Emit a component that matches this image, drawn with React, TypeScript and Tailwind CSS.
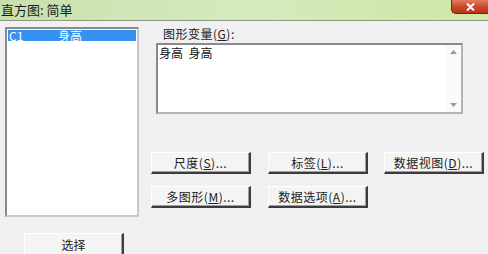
import React from "react"

const font = { fontFamily: '"Noto Sans CJK SC", "DejaVu Sans", sans-serif' }

function Btn({ label, underline, className = "" }: { label: string; underline?: string; className?: string }) {
  // label text, with the hotkey letter underlined inside parentheses
  return (
    <div
      className={
        "h-[22px] w-[100px] flex items-center justify-center bg-[#f4f4f4] border-t border-l border-t-white border-l-white border-r-2 border-b-2 border-r-[#3c3c3c] border-b-[#3c3c3c] text-[12px] text-[#222] shadow-[inset_-1px_-1px_0_#a0a0a0] " +
        className
      }
    >
      {underline ? (
        <span className="tracking-[0.5px]">
          {label}(<span className="underline">{underline}</span>)...
        </span>
      ) : (
        <span>{label}</span>
      )}
    </div>
  )
}

export default function App() {
  return (
    <div className="w-[488px] h-[254px] overflow-hidden flex flex-col bg-[#f0eff1]" style={font}>
      {/* Title bar */}
      <div className="h-[21px] shrink-0 flex items-start justify-between bg-gradient-to-r from-[#c8e0ad] via-[#d5eabd] to-[#cde8a6] border-b border-[#8d9c80]">
        <span className="text-[13px] leading-[19px] text-[#1a1a1a] pl-[1px]">直方图: 简单</span>
        <div className="w-[37px] h-[14px] shrink-0 rounded-bl-[5px] bg-gradient-to-b from-[#e27a5e] via-[#cf4a2c] to-[#b8341a] border-l border-b border-[#6e2616] flex items-center justify-center">
          <svg width="9" height="8" viewBox="0 0 9 8">
            <path d="M1 0.5 L8 7.5 M8 0.5 L1 7.5" stroke="white" strokeWidth="2" />
          </svg>
        </div>
      </div>

      {/* Body */}
      <div className="flex-1 flex pl-[5px] border-l-2 border-l-[#d5e8c0] -ml-[2px]">
        {/* Left column */}
        <div className="flex flex-col w-[134px] pt-[6px]">
          <div className="h-[190px] bg-white border-2 border-t-[#8a8a8a] border-l-[#8a8a8a] border-r-[#c8c8c8] border-b-[#c8c8c8] p-[1px]">
            <div className="h-[11px] bg-[#3592f3] flex items-center text-white text-[12px] leading-none">
              <span className="pl-[1px] w-[50px]">C1</span>
              <span>身高</span>
            </div>
          </div>
          <div className="mt-[16px] ml-[19px]">
            <Btn label="选择" className="h-[24px]" />
          </div>
        </div>

        {/* Right column */}
        <div className="flex flex-col ml-[12px] pt-[6px]">
          <div className="ml-[12px] text-[12px] leading-[14px] text-[#222] tracking-[0.5px]">
            图形变量(<span className="underline">G</span>):
          </div>
          <div className="ml-[5px] mt-[2px] w-[307px] h-[71px] bg-white border-2 border-t-[#8a8a8a] border-l-[#8a8a8a] border-r-[#b4b4b4] border-b-[#b4b4b4] flex">
            <div className="flex-1 text-[12px] leading-[14px] text-[#111] pl-[1px] pt-[1px] whitespace-pre">身高  身高</div>
            <div className="w-[16px] flex flex-col items-center justify-between py-[5px] bg-[#fafafa]">
              <svg width="7" height="4" viewBox="0 0 7 4">
                <path d="M0 4 L3.5 0 L7 4 Z" fill="#9a9a9a" />
              </svg>
              <svg width="7" height="4" viewBox="0 0 7 4">
                <path d="M0 0 L3.5 4 L7 0 Z" fill="#9a9a9a" />
              </svg>
            </div>
          </div>

          <div className="flex gap-[17px] mt-[38px]">
            <Btn label="尺度" underline="S" />
            <Btn label="标签" underline="L" />
            <Btn label="数据视图" underline="D" className="w-[99px] -ml-[1px]" />
          </div>
          <div className="flex gap-[17px] mt-[12px]">
            <Btn label="多图形" underline="M" />
            <Btn label="数据选项" underline="A" />
          </div>
        </div>
      </div>
    </div>
  )
}
